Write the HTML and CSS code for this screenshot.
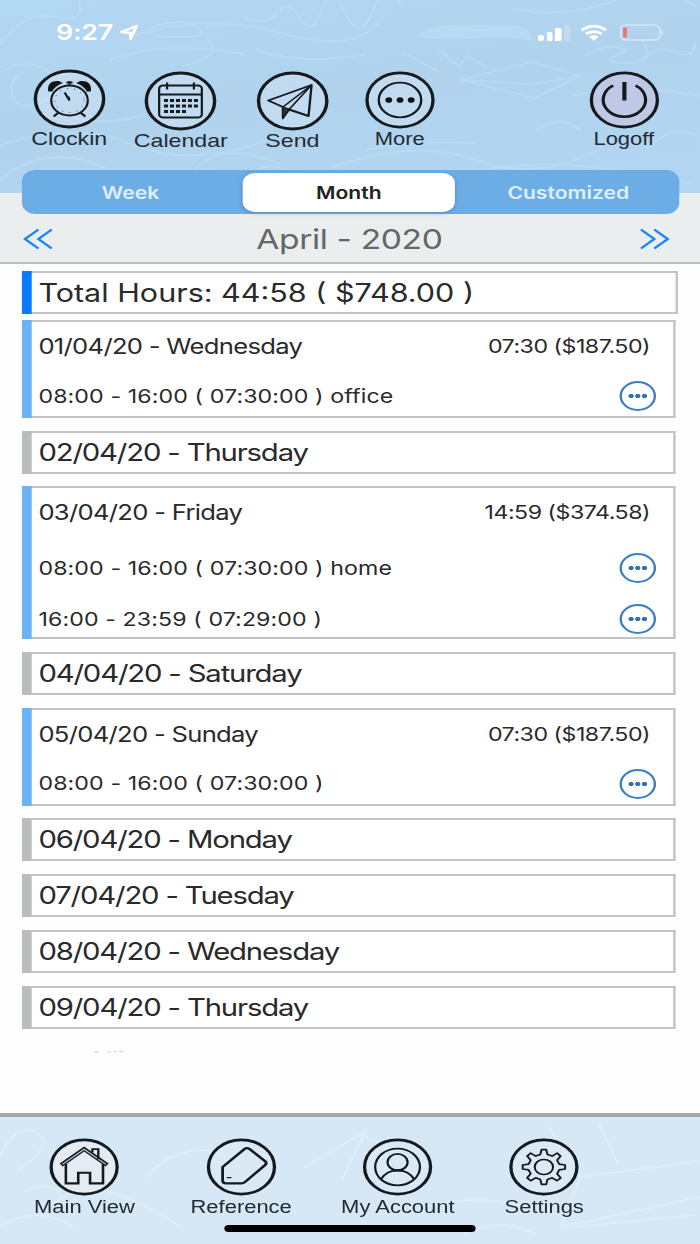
FILE: index.html
```html
<!DOCTYPE html>
<html lang="en">
<head>
  <meta charset="UTF-8">
  <title>Timesheet</title>
  <link rel="stylesheet" href="styles.css">
</head>
<body>
  <div class="phone">
    <header class="top">
      <!-- chalk doodles -->
      <svg class="doodles" width="574" height="193" viewBox="0 0 574 193">
        <path d="M0 45q20-35 45-28t20-17M4 70q24-14 38 4t-8 28-24-8 8-18M110 35q60-22 120-2t80-10M124 28q24-12 38 0t-36 8M170 40q14 16-18 26M200 18q20 8 28-6t18 6 18-8 20 4 24-10 20 2M90 60q40-20 110-6M210 50q40 16 90 4M0 145q60-25 110 0t120-10M0 180q40-40 90-10t70 0 70-6M330 52l30 20M360 50l16 16 8-10 16 12M378 80l58-18 40 14-38 22zM378 80l60 4 38-8M480 55q20-14 34-4-26 12 0 12 24 0 14-18M524 62q14-18 30-10t16-10M440 130q20-16 36 0M530 150q20-26 38-16M270 168q70-30 120-8t100-10M200 186q12-30 38-14t60 8M300 150q50-12 90-6M420 8q40 12 80-6t70 4M470 96q40-14 104 0M60 118q30 8 60-4M380 178q50-30 190 6"/>
        <path class="smudge" d="M342 35q12-10 30-10h50q14 2 15 16-20-5-38-3t-40 1-17-4z"/>
      </svg>
      <div class="status">
        <span class="time">9:27</span>
        <svg class="loc" width="16" height="17" viewBox="0 0 16 17"><path d="M1.500 8 14 2 9 15V9z" fill="none" stroke="#fff" stroke-width="2.300" stroke-linejoin="round"/></svg>
        <svg class="signal" width="27" height="17" viewBox="0 0 27 17">
          <rect x="0" y="11" width="5" height="6" rx="2"/><rect x="7.500" y="8" width="4.500" height="9" rx="1.500"/><rect x="14" y="4" width="5.500" height="13" rx="1.500"/><rect x="21.500" y="1" width="5" height="16" rx="1.500" opacity=".22"/>
        </svg>
        <svg class="wifi" width="22" height="17" viewBox="0 0 23 17">
          <path d="M1 6q10.500-8.500 21 0M4.700 10q6.800-5 13.600 0" fill="none" stroke="#fff" stroke-width="2.800"/><path d="M7.500 13q4-3 8 0l-4 4z" fill="#fff"/>
        </svg>
        <svg class="battery" width="37" height="17" viewBox="0 0 37 17">
          <rect x="1" y="1" width="32" height="15" rx="4.500" fill="none" stroke="#d3e8f8" stroke-width="1.300"/><path d="M34.500 5.500q3 3 0 6z" fill="#d3e8f8"/><rect x="3" y="3.500" width="3" height="10" fill="#ee7070"/>
        </svg>
      </div>

      <nav class="actions">
        <a class="action big">
          <svg class="icon" viewBox="0 0 60 60">
            <circle class="ring" cx="30" cy="30" r="28"/>
            <path d="M13 22q-1-10 8-9.500l2.500 1.500q-6 3-8 8zM47 22q1-10-8-9.500l-2.500 1.500q6 3 8 8z" fill="#111"/>
            <circle cx="30" cy="31.500" r="15" stroke-width="1.800"/>
            <path d="M30 12v4M27.500 13.500h5M26 23.500l4 8M29 27.500l1 4M21 43.500l-4 4M39 43.500l4 4" stroke-width="1.800"/>
            <circle cx="30" cy="31.500" r="12" stroke-width=".6" stroke-dasharray="1 5"/>
          </svg>
          <span>Clockin</span>
        </a>
        <a class="action big low">
          <svg class="icon" viewBox="0 0 60 60">
            <circle class="ring" cx="30" cy="30" r="28"/>
            <rect x="12.500" y="14.500" width="35" height="32" rx="3" stroke-width="1.800"/>
            <path d="M12.500 23.500h35M19 11.500v7M41 11.500v7" stroke-width="1.800"/>
            <path d="M16.500 29.500h28M16.500 35h28M16.500 40.500h19" stroke-width="3" stroke-dasharray="3.300 1.600"/>
          </svg>
          <span>Calendar</span>
        </a>
        <a class="action big low">
          <svg class="icon" viewBox="0 0 60 60">
            <circle class="ring" cx="30" cy="30" r="28"/>
            <path d="M10 29.500 45.500 14 43 45 27 38.500 22 47V36z" stroke-width="1.900" stroke-linejoin="round"/>
            <path d="M22 36 45.500 14 27 38.500" stroke-width="1.300"/>
            <path d="M22 36l5 2-5 9z" fill="#333"/>
          </svg>
          <span>Send</span>
        </a>
        <a class="action more low">
          <svg class="icon" viewBox="0 0 60 60">
            <circle class="ring" cx="30" cy="30" r="28"/>
            <circle cx="30" cy="30" r="18" stroke-width="2"/>
            <g fill="#111" stroke="none"><circle cx="20.500" cy="30" r="2.900"/><circle cx="30" cy="30" r="2.900"/><circle cx="39.500" cy="30" r="2.900"/></g>
          </svg>
          <span>More</span>
        </a>
        <a class="action logoff low">
          <svg class="icon" viewBox="0 0 60 60">
            <circle class="ring" cx="30" cy="30" r="28"/>
            <path d="M20.500 15a18 17.500 0 1 0 19 0" stroke-width="2.700"/>
            <path d="M30 11.500v19" stroke-width="3.500"/>
          </svg>
          <span>Logoff</span>
        </a>
      </nav>
    </header>

    <section class="period">
      <div class="segments">
        <span>Week</span>
        <span class="active">Month</span>
        <span>Customized</span>
      </div>
      <div class="month">
        <svg width="24" height="22" viewBox="0 0 24 22"><path d="M12.500 1.500 1.500 11l11 9.500M23.500 1.500l-11 9.500 11 9.500"/></svg>
        <h1>April - 2020</h1>
        <svg width="24" height="22" viewBox="0 0 24 22"><path d="M.5 1.500l11 9.500-11 9.500M11.500 1.500l11 9.500-11 9.500"/></svg>
      </div>
    </section>

    <main class="list">
      <div class="day total"><h2>Total Hours: 44:58 ( $748.00 )</h2></div>

      <div class="day worked">
        <div class="head"><h3>01/04/20 - Wednesday</h3><b>07:30 ($187.50)</b></div>
        <div class="entry"><span>08:00 - 16:00 ( 07:30:00 ) office</span><i class="dots"></i></div>
      </div>

      <div class="day"><h2>02/04/20 - Thursday</h2></div>

      <div class="day worked multi">
        <div class="head"><h3>03/04/20 - Friday</h3><b>14:59 ($374.58)</b></div>
        <div class="entry"><span>08:00 - 16:00 ( 07:30:00 ) home</span><i class="dots"></i></div>
        <div class="entry"><span>16:00 - 23:59 ( 07:29:00 )</span><i class="dots"></i></div>
      </div>

      <div class="day"><h2>04/04/20 - Saturday</h2></div>

      <div class="day worked">
        <div class="head"><h3>05/04/20 - Sunday</h3><b>07:30 ($187.50)</b></div>
        <div class="entry"><span>08:00 - 16:00 ( 07:30:00 )</span><i class="dots"></i></div>
      </div>

      <div class="day"><h2>06/04/20 - Monday</h2></div>
      <div class="day"><h2>07/04/20 - Tuesday</h2></div>
      <div class="day"><h2>08/04/20 - Wednesday</h2></div>
      <div class="day"><h2>09/04/20 - Thursday</h2></div>

      <svg class="specks" width="40" height="4" viewBox="0 0 40 4"><path d="M1 3h4M12 3h3M17 2l3 1M22 2l3 1"/></svg>
    </main>

    <footer class="tabs">
      <svg class="doodles" width="574" height="127" viewBox="0 0 574 127">
        <path d="M0 40q14-36 30-24t-14 36M40 90q30-30 70-6t40 30M120 60q30-40 70-20M250 50l50-36-20 50M300 20l50 30M450 10l26 50 98-16M476 60l-16 50 114-30M470 110l100-12M490 5l16 40M380 118q30-20 60 0M0 110q30-24 60 0M20 75q16-12 30 0M350 90q40-14 80 0"/>
      </svg>
      <nav>
        <a class="action">
          <svg class="icon" viewBox="0 0 60 60">
            <circle class="ring home" cx="30" cy="30" r="28"/>
            <path d="M14.500 27v20H25V36h10v11h11V27" stroke-width="2.200"/>
            <path d="M10.500 28 30 11.500 49.500 28" stroke-width="4"/>
            <path d="M11.500 27.300 30 11.700 48.500 27.300" stroke="#bbc5cd" stroke-width="1.200"/>
            <path d="M37 15v-3.500h5V22" stroke-width="2"/>
          </svg>
          <span>Main View</span>
        </a>
        <a class="action">
          <svg class="icon" viewBox="0 0 60 60">
            <circle class="ring" cx="30" cy="30" r="28"/>
            <path d="M14 30 32.500 11.500q2-2 4.500 0l13 12.500q2 2 0 4L33 45.500q-1.500 1.500-3 1.500H17q-3 0-3-3z" stroke-width="2.400"/>
            <path d="M17.500 41h4" stroke-width="1.500"/>
          </svg>
          <span>Reference</span>
        </a>
        <a class="action">
          <svg class="icon" viewBox="0 0 60 60">
            <circle class="ring" cx="30" cy="30" r="28"/>
            <circle cx="30" cy="30" r="19" stroke-width="1.900"/>
            <circle cx="30" cy="25" r="8.500" stroke-width="1.900"/>
            <path d="M25 33.500h10" stroke-width="2.200"/>
            <path d="M16 42.500q5-9 14-9t14 9" stroke-width="2"/>
          </svg>
          <span>My Account</span>
        </a>
        <a class="action">
          <svg class="icon" viewBox="0 0 60 60">
            <circle class="ring" cx="30" cy="30" r="28"/>
            <circle cx="30" cy="30" r="7.800" stroke-width="1.700"/>
            <path d="M27 17l1-5h4l1 5 4 1.700 4.200-3 3 3-3 4.300 1.800 4 5 1v4l-5 1-1.800 4 3 4.200-3 3-4.200-3-4 1.800-1 5h-4l-1-5-4-1.800-4.200 3-3-3 3-4.200-1.800-4-5-1v-4l5-1 1.800-4-3-4.300 3-3 4.200 3z" stroke-width="1.700" stroke-linejoin="round"/>
          </svg>
          <span>Settings</span>
        </a>
      </nav>
      <div class="home-bar"></div>
    </footer>
  </div>
</body>
</html>
```
FILE: styles.css
```css
* {
  box-sizing: border-box;
}

html, body {
  margin: 0;
  padding: 0;
  height: 1244px;
  overflow: hidden;
  background: #fefefe;
}

/* 574pt wide screen stretched over the full window */
.phone {
  width: 574px;
  height: 1244px;
  display: flex;
  flex-direction: column;
  transform: scaleX(1.2195);
  transform-origin: 0 0;
  font-family: Inter, "Liberation Sans", sans-serif;
  color: #2a2a2a;
  white-space: nowrap;
}

h1, h2, h3 {
  margin: 0;
  font-weight: 400;
}

.doodles {
  position: absolute;
  top: 0;
  left: 0;
  fill: none;
  stroke: #bfe0f7;
  stroke-width: 2;
  opacity: 0.5;
}

.doodles .smudge {
  fill: #bfe2fa;
  stroke: none;
}

.top {
  position: relative;
  flex: none;
  display: flex;
  flex-direction: column;
  height: 193px;
  background: linear-gradient(170deg, #b3d8f3, #b0d2ed 45%, #b2d6f2);
}

.status {
  position: relative;
  display: flex;
  align-items: center;
  height: 28px;
  margin-top: 18px;
  padding: 0 29px 0 46px;
  color: #fff;
}

.time {
  font-size: 22px;
  font-weight: 600;
  letter-spacing: -0.2px;
}

.loc {
  margin-left: 5px;
}

.signal {
  margin-left: auto;
  fill: #fff;
}

.wifi {
  margin: 0 10px 0 8px;
}

.actions {
  position: relative;
  display: flex;
  padding: 23px 17px 0 11px;
}

.action {
  flex: none;
  width: 91.5px;
  display: flex;
  flex-direction: column;
  align-items: center;
  font: 18px/20px "Liberation Sans", Arial, sans-serif;
  color: #222b33;
}

.action.big {
  font-size: 19px;
}

.action.low {
  padding-top: 2px;
}

.action.more {
  margin-left: -3.5px;
}

.action.logoff {
  width: 91px;
  margin-left: auto;
}

.icon {
  width: 58px;
  height: 58px;
  fill: none;
  stroke: #151a1e;
}

.big .icon {
  width: 60px;
  height: 60px;
}

.icon .ring {
  stroke-width: 2.8;
  fill: rgba(225, 235, 245, 0.35);
}

.icon .ring.home {
  fill: #e4ebf2;
}

.logoff .icon .ring {
  fill: #bfc8e5;
}

.period {
  flex: none;
  height: 71px;
  background: #ebeeef;
  border-bottom: 2px solid #bbbebe;
}

.segments {
  position: relative;
  display: flex;
  height: 44px;
  margin: -23px 17px 0 18px;
  padding: 3px 0;
  border-radius: 11px;
  background: #6dade6;
  font-size: 17.3px;
  font-weight: 600;
  line-height: 39px;
  text-align: center;
  color: #deeffc;
}

.segments span {
  flex: 0 0 181px;
  padding-right: 3px;
}

.segments .active {
  flex-basis: 174px;
  height: 39px;
  padding: 0;
  border-radius: 10px;
  background: #fff;
  color: #222;
  box-shadow: 0 1px 4px rgba(30, 80, 130, 0.35);
}

.segments span:last-child {
  flex: 1;
  padding: 0 0 0 2px;
}

.month {
  display: flex;
  align-items: center;
  justify-content: space-between;
  height: 50px;
  padding: 0 25px 0 19px;
}

.month svg {
  fill: none;
  stroke: #1684ff;
  stroke-width: 2.2;
}

.month h1 {
  padding-left: 5px;
  font-size: 27.5px;
  letter-spacing: -0.3px;
  color: #666;
}

.list {
  flex: none;
  height: 849px;
  padding: 7px 20px 0 18px;
}

.day {
  height: 43px;
  margin-bottom: 12.7px;
  border: 2px solid #c4c4c4;
  border-left: 0;
  padding: 0 19px 0 13.5px;
  background: #fff;
  position: relative;
}

/* colored bar over the left edge */
.day::before {
  content: "";
  position: absolute;
  top: -2px;
  bottom: -2px;
  left: 0;
  width: 8px;
  background: #babdbc;
}

.day h2 {
  font-size: 24px;
  letter-spacing: -0.95px;
  line-height: 40px;
}

.day.total {
  margin: 0 -2px 6px 0;
}

.day.total::before {
  background: #0a7aff;
}

.day.total h2 {
  font-size: 25px;
  letter-spacing: 0;
  line-height: 41px;
}

.day.worked {
  height: 98px;
}

.day.worked::before {
  background: #6ab4f5;
}

.day.multi {
  height: 153px;
}

.head,
.entry {
  display: flex;
  align-items: center;
  justify-content: space-between;
}

.head {
  height: 49px;
}

.multi .head {
  margin-bottom: 6px;
}

.head h3 {
  font-size: 21px;
  letter-spacing: -0.58px;
}

.head b {
  font-size: 19px;
  font-weight: 400;
  letter-spacing: -0.4px;
}

.entry {
  height: 50px;
  margin-bottom: 1px;
  font-size: 19px;
  letter-spacing: 0.08px;
}

.entry .dots {
  width: 30px;
  height: 30px;
  margin-right: -4.5px;
  border: 2.5px solid #3e7fc2;
  border-radius: 50%;
  background:
    radial-gradient(circle at 7.5px 50%, #2f70b5 1.8px, transparent 2.5px),
    radial-gradient(circle at 13px 50%, #2f70b5 1.8px, transparent 2.5px),
    radial-gradient(circle at 18.5px 50%, #2f70b5 1.8px, transparent 2.5px);
}

.specks {
  display: block;
  margin: 20px 0 0 58px;
  stroke: #cfcfcf;
  stroke-width: 1;
}

.tabs {
  position: relative;
  flex: 1;
  border-top: 4px solid #a5a9ad;
  background: #d6e8f6;
}

.tabs .doodles {
  stroke: #e5f2fc;
}

.tabs nav {
  position: relative;
  display: flex;
  padding: 21px 0 0 5px;
}

.tabs .action {
  width: 128.5px;
}

.tabs .action span {
  margin-top: 1px;
}

.tabs .action:nth-child(4) {
  margin-left: -8.5px;
}

.home-bar {
  position: relative;
  width: 206px;
  height: 7px;
  margin: 8px auto 0;
  border-radius: 4px;
  background: #000;
}
```
